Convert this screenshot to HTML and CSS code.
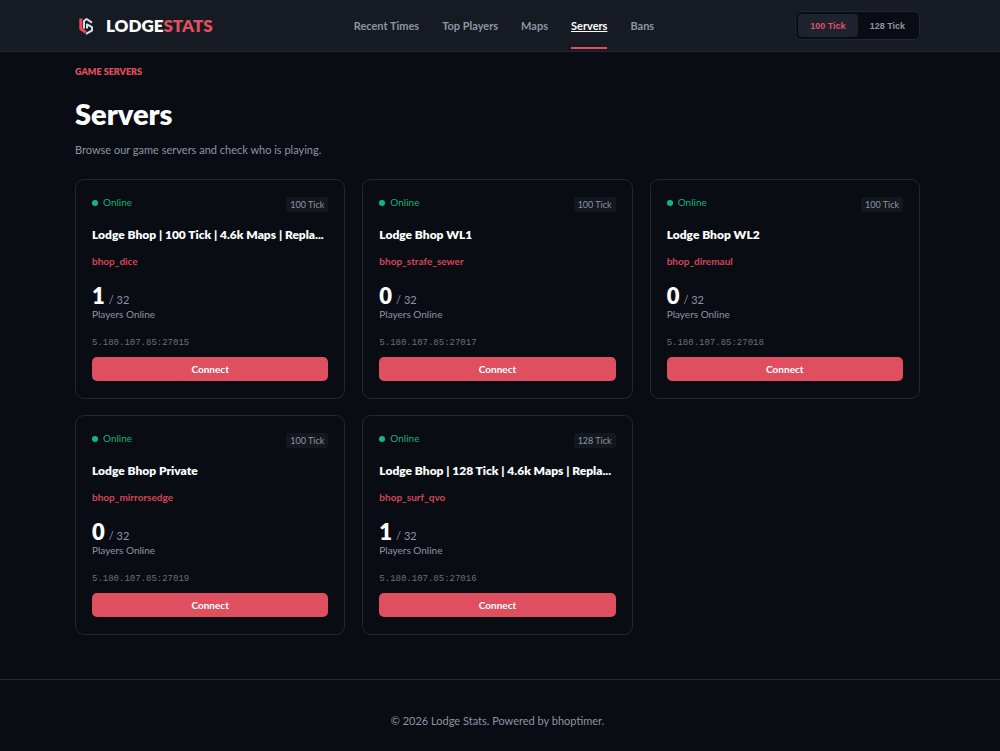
FILE: index.html
```html
<!DOCTYPE html>
<html lang="en">
<head>
<meta charset="utf-8">
<meta name="viewport" content="width=device-width, initial-scale=1">
<title>Servers - Lodge Stats</title>
<link rel="stylesheet" href="styles.css">
</head>
<body>
<header class="site-header">
  <a class="brand" href="#">
    <svg class="brand-icon" viewBox="0 0 22 22" aria-hidden="true">
      <path class="mark-red" d="M5.800 3.500v10.300l5 3.600M5.800 13.800"/>
      <path class="mark-light" d="M9 13.500V6l2.600-2 5.400 3.600M12 13.500V9.500l5 2.700v3.300L11 18.800"/>
    </svg>
    <span class="brand-name">LODGE<span class="accent">STATS</span></span>
  </a>
  <nav class="nav" aria-label="Main">
    <a class="nav-link" href="#">Recent Times</a>
    <a class="nav-link" href="#">Top Players</a>
    <a class="nav-link" href="#">Maps</a>
    <a class="nav-link active" href="#" aria-current="page">Servers</a>
    <a class="nav-link" href="#">Bans</a>
  </nav>
  <div class="toggle" role="group" aria-label="Tick rate">
    <button class="toggle-button selected" type="button" aria-pressed="true">100 Tick</button>
    <button class="toggle-button" type="button" aria-pressed="false">128 Tick</button>
  </div>
</header>
<main class="content">
  <p class="eyebrow">GAME SERVERS</p>
  <h1 class="title">Servers</h1>
  <p class="intro">Browse our game servers and check who is playing.</p>
  <div class="grid">
    <article class="card">
      <div class="card-top"><span class="status">Online</span><span class="badge">100 Tick</span></div>
      <h2 class="name">Lodge Bhop | 100 Tick | 4.6k Maps | Repla...</h2>
      <a class="map" href="#">bhop_dice</a>
      <p class="count"><strong class="players">1</strong> / 32</p>
      <p class="label">Players Online</p>
      <code class="address">5.180.107.85:27015</code>
      <button class="connect" type="button">Connect</button>
    </article>
    <article class="card">
      <div class="card-top"><span class="status">Online</span><span class="badge">100 Tick</span></div>
      <h2 class="name">Lodge Bhop WL1</h2>
      <a class="map" href="#">bhop_strafe_sewer</a>
      <p class="count"><strong class="players">0</strong> / 32</p>
      <p class="label">Players Online</p>
      <code class="address">5.180.107.85:27017</code>
      <button class="connect" type="button">Connect</button>
    </article>
    <article class="card">
      <div class="card-top"><span class="status">Online</span><span class="badge">100 Tick</span></div>
      <h2 class="name">Lodge Bhop WL2</h2>
      <a class="map" href="#">bhop_diremaul</a>
      <p class="count"><strong class="players">0</strong> / 32</p>
      <p class="label">Players Online</p>
      <code class="address">5.180.107.85:27018</code>
      <button class="connect" type="button">Connect</button>
    </article>
    <article class="card">
      <div class="card-top"><span class="status">Online</span><span class="badge">100 Tick</span></div>
      <h2 class="name">Lodge Bhop Private</h2>
      <a class="map" href="#">bhop_mirrorsedge</a>
      <p class="count"><strong class="players">0</strong> / 32</p>
      <p class="label">Players Online</p>
      <code class="address">5.180.107.85:27019</code>
      <button class="connect" type="button">Connect</button>
    </article>
    <article class="card">
      <div class="card-top"><span class="status">Online</span><span class="badge">128 Tick</span></div>
      <h2 class="name">Lodge Bhop | 128 Tick | 4.6k Maps | Repla...</h2>
      <a class="map" href="#">bhop_surf_qvo</a>
      <p class="count"><strong class="players">1</strong> / 32</p>
      <p class="label">Players Online</p>
      <code class="address">5.180.107.85:27016</code>
      <button class="connect" type="button">Connect</button>
    </article>
  </div>
</main>
<footer class="footer">© 2026 Lodge Stats. Powered by bhoptimer.</footer>
</body>
</html>
```
FILE: styles.css
```css
* { box-sizing: border-box; }

body {
  margin: 0;
  min-height: 100vh;
  background: #090c13;
  color: #8c95a4;
  font: 11px/14px Lato, sans-serif;
}

h1, h2, p { margin: 0; }
a { color: inherit; text-decoration: none; }
button { border: 0; cursor: pointer; }

.site-header {
  display: flex;
  align-items: center;
  justify-content: space-between;
  height: 52px;
  padding: 0 80px 0 75px;
  background: #161a23;
  border-bottom: 1px solid #222633;
}

.brand { display: flex; align-items: center; gap: 9px; }
.brand-icon { width: 22px; height: 22px; fill: none; stroke-width: 2; stroke-linejoin: round; }
.mark-red { stroke: #e64c5d; stroke-width: 3; }
.mark-light { stroke: #d3e0e8; }
.brand-name { color: #fff; font-size: 17px; font-weight: 800; line-height: 22px; }
.accent { color: #e04f5f; }

.nav { display: flex; align-self: stretch; gap: 23px; }
.nav-link {
  display: flex;
  align-items: center;
  margin-bottom: 2px;
  padding-top: 4px;
  border-bottom: 2px solid transparent;
  font-weight: 700;
}
.active { border-color: #e04f5f; color: #fff; text-decoration: underline; }

.toggle {
  display: flex;
  padding: 2px;
  background: #090c13;
  border: 1px solid #222633;
  border-radius: 6px;
}
.toggle-button {
  height: 23px;
  padding: 0 12px;
  background: transparent;
  border-radius: 4px;
  color: #8c95a4;
  font: bold 9px/14px "Liberation Sans", Arial, sans-serif;
}
.selected { background: #1e222e; color: #e04f5f; }

.content { padding: 13px 80px 44px 75px; }
.eyebrow { color: #e04f5f; font-size: 9px; font-weight: 800; }
.title { margin-top: 18px; color: #fff; font-size: 29px; font-weight: 800; line-height: 34px; }
.intro { margin-top: 11px; line-height: 16px; }

.grid {
  display: grid;
  grid-template-columns: repeat(3, minmax(0, 1fr));
  gap: 16px 17px;
  margin-top: 21px;
}
.card {
  display: flex;
  flex-direction: column;
  align-items: stretch;
  padding: 17px 16px;
  border: 1px solid #222633;
  border-radius: 9px;
}
.card-top { display: flex; align-items: flex-start; justify-content: space-between; }
.status { display: flex; align-items: center; gap: 5px; color: #10b17c; font-size: 10px; line-height: 11px; }
.status::before { content: ""; width: 6px; height: 6px; border-radius: 50%; background: #10b981; }
.badge { padding: 0 4px; background: #14171e; border-radius: 3px; font-size: 9px; line-height: 15px; }
.name {
  margin-top: 13px;
  overflow: hidden;
  color: #fff;
  font-size: 12px;
  font-weight: 800;
  line-height: 20px;
  text-overflow: ellipsis;
  white-space: nowrap;
}
.map { align-self: flex-start; margin-top: 9px; color: #d64555; font-size: 10px; font-weight: 700; }
.count { display: flex; align-items: baseline; gap: 4px; height: 24px; margin-top: 16px; line-height: 24px; }
.players { color: #fff; font-size: 22px; font-weight: 800; }
.label { font-size: 10px; line-height: 13px; }
.address { margin-top: 16px; color: #6b7079; font: 9px/12px "Liberation Mono", monospace; }
.connect {
  height: 24px;
  margin-top: 8px;
  background: #e04f5f;
  border-radius: 5px;
  color: #fff;
  font: 700 10px/14px Lato, sans-serif;
}

.footer {
  padding: 34px 80px 24px 75px;
  border-top: 1px solid #222633;
  line-height: 14px;
  text-align: center;
}
```
